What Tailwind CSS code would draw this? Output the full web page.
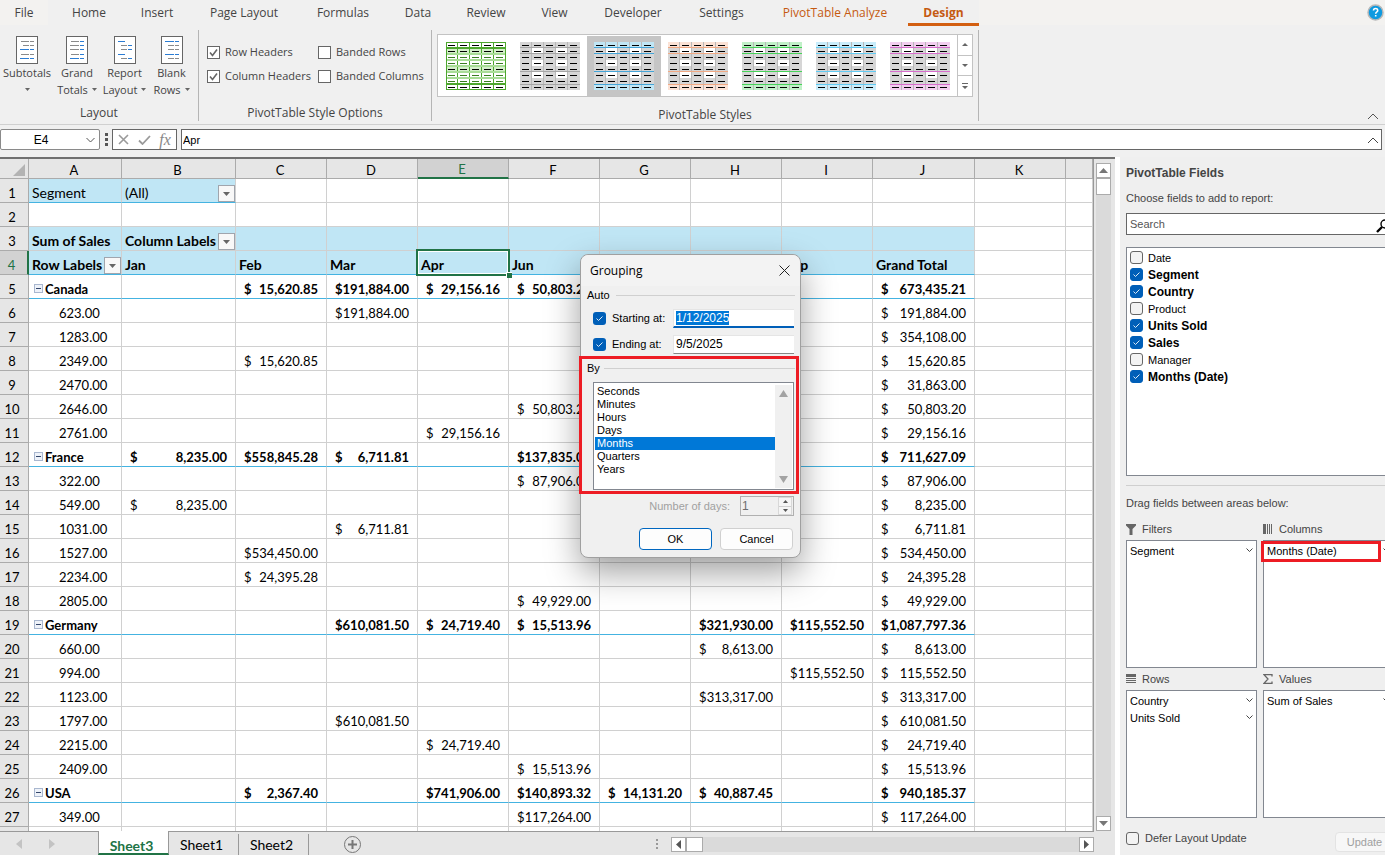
<!DOCTYPE html>
<html lang="en">
<head>
  <meta charset="UTF-8" />
  <meta name="viewport" content="width=device-width, initial-scale=1.0" />
  <title>PivotTable Grouping</title>
  <script src="https://cdn.jsdelivr.net/npm/@tailwindcss/browser@4"></script>
</head>
<body class="h-screen flex flex-col overflow-hidden bg-[#f0f0f0] text-[#444] font-['Open_Sans',sans-serif] text-[12px]">

  <!-- ribbon tabs -->
  <nav class="flex shrink-0 h-[27px] bg-[#f0f0f0] relative">
    <a href="#" class="w-12 h-[25px] flex items-center justify-center bg-[#f3f2f0]">File</a>
    <a href="#" class="w-[82px] h-[25px] flex items-center justify-center">Home</a>
    <a href="#" class="w-[54px] h-[25px] flex items-center justify-center">Insert</a>
    <a href="#" class="w-[120px] h-[25px] flex items-center justify-center">Page Layout</a>
    <a href="#" class="w-[78px] h-[25px] flex items-center justify-center">Formulas</a>
    <a href="#" class="w-[72px] h-[25px] flex items-center justify-center">Data</a>
    <a href="#" class="w-16 h-[25px] flex items-center justify-center">Review</a>
    <a href="#" class="w-[73px] h-[25px] flex items-center justify-center">View</a>
    <a href="#" class="w-[84px] h-[25px] flex items-center justify-center">Developer</a>
    <a href="#" class="w-[93px] h-[25px] flex items-center justify-center">Settings</a>
    <a href="#" class="w-[134px] h-[25px] flex items-center justify-center text-[#c55a11]">PivotTable Analyze</a>
    <a href="#" class="ml-1.5 w-[71px] h-[26px] pt-0.5 flex items-center justify-center font-bold text-[#c55a11] border-b-3 border-[#d35f11]">Design</a>
    <div class="flex-1 h-[25px] bg-[#f3f2f0] flex justify-end">
      <button aria-label="Help" class="w-[18px]">
        <svg class="size-[17px]" viewBox="0 0 17 17"><circle cx="8.5" cy="8.5" r="7.5" fill="#0f9ae0" stroke="#b8b8b8" stroke-width="1.5"/><path d="M6.5 6.6c0-2.8 4.2-2.8 4.2-.2 0 1.6-2 1.6-2 3.3M8.7 11v1.6" fill="none" stroke="#fff" stroke-width="1.6"/></svg>
      </button>
    </div>
  </nav>

  <!-- ribbon -->
  <section class="flex shrink-0 h-[98px] border-b border-[#d0d0d0] text-[11px] relative">
    <div class="w-[199px] my-[3px] border-r border-[#b5b5b5] flex flex-col">
      <div id="layout-buttons" class="flex h-[78px] pt-1.5 pl-[2px]"></div>
      <div class="text-center text-[12px] leading-4">Layout</div>
    </div>
    <div class="w-[233px] my-[3px] border-r border-[#b5b5b5] flex flex-col">
      <div id="style-options" class="grid grid-cols-[111px_1fr] h-[78px] pl-2 pt-3 auto-rows-[24px]"></div>
      <div class="text-center text-[12px] leading-4">PivotTable Style Options</div>
    </div>
    <div class="w-[547px] my-[3px] border-r border-[#b5b5b5] flex flex-col">
      <div class="ml-[5px] mt-1 w-[536px] h-[64px] border border-[#c3c3c3] bg-white flex">
        <div id="gallery" class="flex flex-1 pt-px pl-px"></div>
        <div class="w-[15px] border-l border-[#c3c3c3] flex flex-col divide-y divide-[#c3c3c3]">
          <button aria-label="Scroll up" class="flex-1 grid place-items-center"><svg class="w-1.5 h-[3px]" viewBox="0 0 6 3"><path d="M0 3 3 0l3 3z" fill="#666"/></svg></button>
          <button aria-label="Scroll down" class="flex-1 grid place-items-center"><svg class="w-1.5 h-[3px]" viewBox="0 0 6 3"><path d="M0 0h6L3 3z" fill="#666"/></svg></button>
          <button aria-label="More styles" class="flex-1 grid place-items-center"><svg class="w-1.5 h-[6px]" viewBox="0 0 6 6"><path d="M0 0h6v1H0zM0 3h6L3 6z" fill="#666"/></svg></button>
        </div>
      </div>
      <div class="text-center text-[12px] leading-4 mt-[10px]">PivotTable Styles</div>
    </div>
    <div class="flex-1 flex justify-end items-end">
      <button aria-label="Collapse ribbon" class="pr-1.5 pb-1"><svg class="w-3 h-[7px]" viewBox="0 0 12 7"><path d="M1 6l5-5 5 5" fill="none" stroke="#555"/></svg></button>
    </div>
  </section>

  <!-- formula bar -->
  <section class="flex shrink-0 h-8 pt-1 pr-[3px] text-[11px] text-black font-['Liberation_Sans',sans-serif]">
    <div class="w-[100px] h-[21px] border border-[#8a8a8a] rounded-[2px] bg-white flex items-center">
      <input aria-label="Name box" value="E4" class="w-[80px] text-center outline-none text-[12px]" />
      <button aria-label="Names" class="ml-[5px]"><svg class="w-[9px] h-[6px]" viewBox="0 0 9 6"><path d="M.5 1l4 4 4-4" fill="none" stroke="#555"/></svg></button>
    </div>
    <svg class="w-3 h-[21px]" viewBox="0 0 12 21"><path d="M5 4h3v3H5zM5 9h3v3H5zM5 14h3v3H5z" fill="#555"/></svg>
    <div class="w-[65px] h-[21px] border border-[#666] bg-white flex items-center justify-around px-px">
      <button aria-label="Cancel"><svg class="size-[11px]" viewBox="0 0 11 11"><path d="M1 1l9 9M10 1l-9 9" stroke="#9a9a9a" stroke-width="1.6"/></svg></button>
      <button aria-label="Enter"><svg class="w-[13px] h-[10px]" viewBox="0 0 13 10"><path d="M1 5.5l3.5 3.5L12 1" fill="none" stroke="#9a9a9a" stroke-width="1.8"/></svg></button>
      <button aria-label="Insert function" class="font-['Liberation_Serif',serif] italic text-[16px] leading-4 text-[#888]">fx</button>
    </div>
    <div class="ml-1 flex-1 h-[21px] border border-[#666] bg-white flex items-center">
      <input aria-label="Formula" value="Apr" class="flex-1 pl-px pt-0.5 outline-none" />
      <button aria-label="Collapse formula bar" class="pr-0.5 pt-0.5"><svg class="w-3 h-[7px]" viewBox="0 0 12 7"><path d="M1 6l5-5 5 5" fill="none" stroke="#444"/></svg></button>
    </div>
  </section>

  <main class="flex flex-1 min-h-0">
    <!-- worksheet -->
    <section class="flex-1 min-w-0 flex flex-col bg-[#e6e6e6] border-t-2 border-[#707070] font-['Lato',sans-serif] text-black">
      <div class="flex flex-1 min-h-0">
        <div class="flex-1 min-w-0 overflow-hidden bg-white border-r border-[#999]">
          <table id="sheet" class="w-full table-fixed border-separate border-spacing-0 text-[13px] leading-4"></table>
        </div>
        <div class="w-[21px] flex flex-col pl-[2px] pt-1">
          <div class="w-[15px] flex-1 flex flex-col bg-[#dadada]">
            <button aria-label="Scroll up" class="h-[15px] border border-[#ababab] bg-white grid place-items-center"><svg class="w-[9px] h-[5px]" viewBox="0 0 9 5"><path d="M0 5L4.500 0 9 5z" fill="#777"/></svg></button>
            <div class="h-[17px] border border-[#ababab] bg-white"></div>
            <div class="flex-1"></div>
            <button aria-label="Scroll down" class="h-[15px] border border-[#ababab] bg-white grid place-items-center"><svg class="w-[9px] h-[5px]" viewBox="0 0 9 5"><path d="M0 0h9L4.500 5z" fill="#777"/></svg></button>
          </div>
        </div>
      </div>
      <!-- sheet tabs -->
      <div class="flex h-6 shrink-0 border-t border-[#999] items-stretch mr-[21px] text-[14px]">
        <div class="w-[98px] flex items-center gap-[27px] pl-4">
          <svg class="w-[6px] h-[10px]" viewBox="0 0 6 10"><path d="M6 0v10L0 5z" fill="#c3c3c3"/></svg>
          <svg class="w-[6px] h-[10px]" viewBox="0 0 6 10"><path d="M0 0v10l6-5z" fill="#c3c3c3"/></svg>
        </div>
        <button class="-mt-px w-[71px] pt-1 pr-1 bg-white border-x border-[#999] border-b-2 border-b-[#217346] font-bold text-[#217346]">Sheet3</button>
        <button class="w-[70px] pt-px"><span class="block pr-1 border-r border-[#999]">Sheet1</span></button>
        <button class="w-[70px] pt-px"><span class="block pr-1 border-r border-[#999]">Sheet2</span></button>
        <button aria-label="New sheet" class="ml-[35px] pt-0.5"><svg class="size-[17px]" viewBox="0 0 17 17" fill="none" stroke="#777"><circle cx="8.500" cy="8.500" r="8"/><path d="M8.500 4v9M4 8.500h9" stroke-width="2"/></svg></button>
        <div class="flex-1"></div>
        <div class="w-[438px] flex items-center pt-0.5">
          <svg class="w-[2px] h-[11px] mr-[13px]" viewBox="0 0 2 11"><path d="M0 0h2v2H0zM0 4h2v2H0zM0 8h2v2H0z" fill="#999"/></svg>
          <button aria-label="Scroll left" class="size-[15px] border border-[#ababab] bg-white grid place-items-center"><svg class="w-[5px] h-[9px]" viewBox="0 0 5 9"><path d="M5 0v9L0 4.500z" fill="#555"/></svg></button>
          <div class="w-[17px] h-[15px] border border-[#ababab] bg-white"></div>
          <div class="flex-1 h-[15px] bg-[#dadada]"></div>
          <button aria-label="Scroll right" class="size-[15px] border border-[#ababab] bg-white grid place-items-center"><svg class="w-[5px] h-[9px]" viewBox="0 0 5 9"><path d="M0 0v9l5-4.500z" fill="#555"/></svg></button>
        </div>
      </div>
    </section>

    <!-- field list pane -->
    <aside class="w-[270px] shrink-0 overflow-hidden bg-[#efefef] border-l-5 border-white font-['Liberation_Sans',sans-serif] text-[11px] leading-4">
      <div class="w-[274px] pl-1.5 pt-2">
        <h2 class="font-bold text-[12px] leading-4">PivotTable Fields</h2>
        <p class="mt-[9px]"><label for="search">Choose fields to add to report:</label></p>
        <div class="mt-[7px] h-[22px] border border-[#666] bg-white flex items-center">
          <input id="search" placeholder="Search" class="flex-1 pl-[3px] outline-none placeholder:text-[#555]" />
          <svg class="w-[17px] h-[15px] mt-1" viewBox="0 0 17 15" fill="none" stroke="#000"><circle cx="9" cy="5" r="4" stroke-width="1.400"/><path d="M6 8l-5 5" stroke-width="2.400"/></svg>
        </div>
        <div id="fields" class="mt-3 h-[229px] border border-[#828790] bg-white pl-[3px] pt-px text-black"></div>
        <hr class="mt-[9px] border-[#cfcfcf]" />
        <p class="mt-[9px]">Drag fields between areas below:</p>
        <div class="mt-[10px] grid grid-cols-2 gap-x-1.5 gap-y-[3px]">
          <div>
            <h3 class="h-[19px] flex items-start gap-1.5">
              <svg class="w-[10px] h-[11px] mt-[3px]" viewBox="0 0 10 11"><path d="M0 0h10v1.500L6.500 5v6h-3V5L0 1.500z" fill="#666"/></svg>Filters</h3>
            <div class="h-[128px] border border-[#828790] bg-white pl-[3px] pt-px text-black">
              <div class="h-[17px] flex justify-between items-center">Segment<button aria-label="Segment menu" class="pr-[3px]"><svg class="w-[7px] h-[5px]" viewBox="0 0 7 5"><path d="M.5.5l3 3 3-3" fill="none" stroke="#444"/></svg></button></div>
            </div>
          </div>
          <div>
            <h3 class="h-[19px] flex items-start gap-1.5">
              <svg class="w-[10px] h-[10px] mt-[3px]" viewBox="0 0 10 10"><path d="M0 0h3v10H0zM4 0h1v10H4zM6 0h1v10H6zM8 0h1v10H8z" fill="#666"/></svg>Columns</h3>
            <div class="relative h-[128px] border border-[#828790] bg-white pl-[3px] pt-px text-black">
              <div class="h-[17px] flex justify-between items-center">Months (Date)<button aria-label="Months menu" class="pr-[3px]"><svg class="w-[7px] h-[5px]" viewBox="0 0 7 5"><path d="M.5.5l3 3 3-3" fill="none" stroke="#444"/></svg></button></div>
              <div class="absolute -left-[3px] top-0 w-[120px] h-[21px] border-3 border-[#ed1c24] pointer-events-none"></div>
            </div>
          </div>
          <div>
            <h3 class="h-[19px] flex items-start gap-1.5">
              <svg class="w-[10px] h-[10px] mt-[3px]" viewBox="0 0 10 10"><path d="M0 0h10v3H0zM0 4h10v1H0zM0 6h10v1H0zM0 8h10v1H0z" fill="#666"/></svg>Rows</h3>
            <div class="h-[128px] border border-[#828790] bg-white pl-[3px] pt-px text-black">
              <div class="h-[17px] flex justify-between items-center">Country<button aria-label="Country menu" class="pr-[3px]"><svg class="w-[7px] h-[5px]" viewBox="0 0 7 5"><path d="M.5.5l3 3 3-3" fill="none" stroke="#444"/></svg></button></div>
              <div class="h-[17px] flex justify-between items-center">Units Sold<button aria-label="Units Sold menu" class="pr-[3px]"><svg class="w-[7px] h-[5px]" viewBox="0 0 7 5"><path d="M.5.5l3 3 3-3" fill="none" stroke="#444"/></svg></button></div>
            </div>
          </div>
          <div>
            <h3 class="h-[19px] flex items-start gap-1.5">
              <svg class="w-[10px] h-[10px] mt-[3px]" viewBox="0 0 10 10"><path d="M9 2.500V.700H1L5 5 1 9.300h8V7.500" fill="none" stroke="#666" stroke-width="1.300"/></svg>Values</h3>
            <div class="h-[128px] border border-[#828790] bg-white pl-[3px] pt-px text-black">
              <div class="h-[17px] flex justify-between items-center">Sum of Sales<button aria-label="Sum of Sales menu" class="pr-[3px]"><svg class="w-[7px] h-[5px]" viewBox="0 0 7 5"><path d="M.5.5l3 3 3-3" fill="none" stroke="#444"/></svg></button></div>
            </div>
          </div>
        </div>
        <div class="mt-3 flex items-start justify-between">
          <label class="flex items-center gap-[6px]"><input type="checkbox" class="appearance-none size-[13px] border border-[#666] rounded-[3px] bg-[#f3f3f3]" />Defer Layout Update</label>
          <button disabled class="mt-0.5 w-[59px] h-5 border border-[#e3e3e3] rounded-[4px] bg-[#f7f7f7] text-[#a0a0a0]">Update</button>
        </div>
      </div>
    </aside>
  </main>

  <!-- Grouping dialog -->
  <div role="dialog" aria-labelledby="dlg-title" class="absolute left-[580px] top-[254px] w-[221px] h-[304px] rounded-[8px] border border-[#a0a0a0] bg-[#f0f0f0] shadow-[0_14px_34px_rgba(0,0,0,0.38)] font-['Liberation_Sans',sans-serif] text-[11px] leading-[13px] text-black">
    <div class="h-[31px] rounded-t-[8px] bg-[#f3f3f3] flex items-center justify-between pl-[9px] pr-2.5 pb-px font-['Open_Sans',sans-serif] text-[12px]">
      <span id="dlg-title">Grouping</span>
      <button aria-label="Close"><svg class="size-[11px]" viewBox="0 0 11 11"><path d="M.5.5l10 10M10.500.500l-10 10" stroke="#222"/></svg></button>
    </div>
    <div class="pl-1.5 pr-[5px]">
      <div class="flex items-center gap-1.5 pt-[3px]">Auto<span class="flex-1 h-px bg-[#d0d0d0]"></span></div>
      <div class="mt-1.5 pl-1.5 flex flex-col gap-[6px]">
        <div class="flex items-center h-5">
          <label class="w-[80px] flex items-center gap-1.5"><span class="relative size-[13px]"><input type="checkbox" checked class="block appearance-none size-[13px] rounded-[3px] bg-[#005fb8]" /><svg class="absolute inset-0 size-[13px] pointer-events-none" viewBox="0 0 13 13"><path d="M3.500 6.500l2 2 4-4" fill="none" stroke="#dce9f5"/></svg></span>Starting at:</label>
          <input id="start" aria-label="Start date" value="1/12/2025" class="w-[121px] h-[19px] bg-white border-t border-l border-[#e5e5e5] border-b-2 border-b-[#005fb8] pl-[2px] text-[12px] outline-none selection:bg-[#0078d7] selection:text-white" />
        </div>
        <div class="flex items-center h-5">
          <label class="w-[80px] flex items-center gap-1.5"><span class="relative size-[13px]"><input type="checkbox" checked class="block appearance-none size-[13px] rounded-[3px] bg-[#005fb8]" /><svg class="absolute inset-0 size-[13px] pointer-events-none" viewBox="0 0 13 13"><path d="M3.500 6.500l2 2 4-4" fill="none" stroke="#dce9f5"/></svg></span>Ending at:</label>
          <input aria-label="End date" value="9/5/2025" class="w-[121px] h-[19px] bg-white border-t border-l border-[#e5e5e5] border-b border-b-[#868686] pl-[2px] text-[12px] outline-none" />
        </div>
      </div>
      <div class="flex items-center gap-1 pt-2">By<span class="flex-1 h-px bg-[#d0d0d0]"></span></div>
      <div class="mt-[7px] ml-1.5 w-[201px] h-[108px] border border-[#828790] bg-white p-px pt-0.5 flex">
        <ul role="listbox" aria-label="By" class="flex-1">
          <li role="option" class="pl-[2px]">Seconds</li>
          <li role="option" class="pl-[2px]">Minutes</li>
          <li role="option" class="pl-[2px]">Hours</li>
          <li role="option" class="pl-[2px]">Days</li>
          <li role="option" aria-selected="true" class="pl-[2px] bg-[#0078d7] text-white">Months</li>
          <li role="option" class="pl-[2px]">Quarters</li>
          <li role="option" class="pl-[2px]">Years</li>
        </ul>
        <div class="w-[17px] bg-[#f0f0f0] flex flex-col justify-between items-center py-[5px]">
          <svg class="w-[9px] h-[7px]" viewBox="0 0 9 7"><path d="M4.500 0L9 7H0z" fill="#a3a3a3"/></svg>
          <svg class="w-[9px] h-[7px]" viewBox="0 0 9 7"><path d="M0 0h9L4.500 7z" fill="#a3a3a3"/></svg>
        </div>
      </div>
      <div class="mt-1.5 flex justify-end items-center gap-[10px] pr-px text-[#a0a0a0]">
        <label for="days">Number of days:</label>
        <div class="w-[54px] h-5 border border-[#b0b0b0] flex">
          <input id="days" value="1" disabled class="w-[37px] pl-px text-[#6d6d6d] text-[12px]" />
          <div class="w-[14px] flex flex-col divide-y divide-[#d0d0d0] border border-[#d8d8d8] bg-[#f5f5f5]">
            <button disabled aria-label="More days" class="flex-1 grid place-items-center"><svg class="w-[5px] h-[3px]" viewBox="0 0 5 3"><path d="M0 3L2.500 0 5 3z" fill="#555"/></svg></button>
            <button disabled aria-label="Fewer days" class="flex-1 grid place-items-center"><svg class="w-[5px] h-[3px]" viewBox="0 0 5 3"><path d="M0 0h5L2.500 3z" fill="#555"/></svg></button>
          </div>
        </div>
      </div>
      <div class="mt-3 flex justify-end gap-2 pr-[2px]">
        <button class="w-[73px] h-[22px] rounded-[4px] border border-[#0067c0] bg-[#fdfdfd]">OK</button>
        <button class="w-[73px] h-[22px] rounded-[4px] border border-[#d0d0d0] bg-[#fdfdfd]">Cancel</button>
      </div>
    </div>
    <div class="absolute -left-[2px] top-[101px] w-[220px] h-[138px] border-3 border-[#ed1c24] pointer-events-none"></div>
  </div>

  <script>
    // ribbon Layout buttons: each icon line is [x1, x2, left colour, right colour]
    const G = "#8a8a8a", B = "#2b7cd3";
    const layoutButtons = [
      ["w-[50px]", "Subtotals", "", [[5, 12, G, G], [7, 12, G, G], [4, 12, B, B], [5, 12, G, G], [4, 12, B, B]]],
      ["w-[50px]", "Grand", "Totals", [[5, 12, G, B], [4, 12, G, B], [4, 12, G, B], [5, 12, G, B], [4, 12, B, B]]],
      ["w-[45px]", "Report", "Layout", [[4, 10, B, ""], [7, 12, G, B], [7, 12, G, B], [4, 10, B, ""], [7, 12, G, B]]],
      ["w-[49px]", "Blank", "Rows", [[4, 12, B, B], [7, 12, G, G], [7, 12, G, G], [4, 12, B, B], [7, 12, G, G]]],
    ];
    const caret = `<svg class="w-[5px] h-[3px]" viewBox="0 0 5 3"><path d="M0 0h5L2.500 3z" fill="#666"/></svg>`;
    document.getElementById("layout-buttons").innerHTML = layoutButtons.map(([w, a, b, lines]) => `
      <button class="${w} flex flex-col items-center">
        <svg class="w-[22px] h-[28px]" viewBox="0 0 22 28">
          <rect x=".5" y=".5" width="21" height="27" fill="#fff" stroke="#666"/>
          ${lines.map(([x1, x2, c1, c2], i) => {
            const y = [5.5, 9.5, 13.5, 18.5, 22.5][i];
            return `<path d="M${x1} ${y}H${x2 + 1}" stroke="${c1}"/>` + (c2 ? `<path d="M14 ${y}h4" stroke="${c2}"/>` : "");
          }).join("")}
        </svg>
        <span class="leading-[17px]">${a}</span>
        <span class="leading-[17px] min-h-[17px] flex items-center gap-1">${b}${caret}</span>
      </button>`).join("");

    document.getElementById("style-options").innerHTML = [
      ["Row Headers", true], ["Banded Rows", false], ["Column Headers", true], ["Banded Columns", false],
    ].map(([t, on]) => `
      <label class="flex items-center gap-[5px] whitespace-nowrap h-5"><span class="relative size-[13px]">
        <input type="checkbox" ${on ? "checked" : ""} class="block appearance-none size-[13px] border border-[#666] bg-white" />
        ${on ? `<svg class="absolute inset-0 size-[13px] pointer-events-none" viewBox="0 0 13 13"><path d="M3 6.500l2.500 3L10 3.500" fill="none" stroke="#666" stroke-width="1.600"/></svg>` : ""}
      </span>${t}</label>`).join("");

    // PivotTable style thumbnails
    function thumb(fill, line) {
      let s = "";
      const green = !fill;
      for (let r = 0; r < 8; r++) {
        const edge = r === 0 || r === 7;
        const bg = green ? (r === 1 || r === 4 ? "#d5efcb" : "#fff") : edge ? fill : "#d6d6d6";
        s += `<rect x="0" y="${r * 6}" width="60" height="6" fill="${bg}"/>`;
        for (let c = 0; c < 5; c++) {
          if (!green && (r === 1 || r === 3 || r === 5) && (c === 1 || c === 3)) s += `<rect x="${c * 12}" y="${r * 6}" width="11" height="6" fill="#fff"/>`;
        }
      }
      for (let c = 1; c < 5; c++) s += `<path d="M${c * 12 - .5} 0v48" stroke="${green ? "#4ea72e" : "#b9b9b9"}"/>`;
      if (green) {
        s += `<path d="M0 12h60M0 18h60M0 24h60M0 30h60M0 36h60" stroke="#a9dd97" stroke-width="2"/><rect x=".5" y=".5" width="59" height="47" fill="none" stroke="#4ea72e"/><path d="M0 6h60M0 42h60" stroke="#4ea72e" stroke-width="2"/>`;
      } else {
        s += `<path d="M0 5.500h60M0 11.500h60M0 29.500h60M0 42.500h60" stroke="${line}"/>`;
      }
      for (let r = 0; r < 8; r++) for (let c = 0; c < 5; c++) {
        const dark = !green || r === 0 || r === 1 || r === 4 || r === 7;
        s += `<rect x="${c * 12 + 2}" y="${r * 6 + 3}" width="7" height="1" fill="${dark ? "#000" : "#3a7d22"}"/>`;
      }
      return `<svg class="w-[60px] h-[48px]" viewBox="0 0 60 48">${s}</svg>`;
    }
    const styles = [["", ""], ["#d6d6d6", "#a6a6a6"], ["#c0e6f5", "#44a5d8"], ["#fbe2d5", "#f1a983"], ["#c1f0c8", "#47d359"], ["#caedfb", "#61cbf3"], ["#f2ceef", "#d86dcd"]];
    document.getElementById("gallery").innerHTML = styles.map(([f, l], i) =>
      `<button aria-label="Pivot style ${i + 1}" class="w-[74px] h-[60px] grid place-items-center ${i === 2 ? "bg-[#c5c5c5]" : ""}">${thumb(f, l)}</button>`).join("");

    // field list
    document.getElementById("fields").innerHTML = [
      ["Date", 0], ["Segment", 1], ["Country", 1], ["Product", 0], ["Units Sold", 1], ["Sales", 1], ["Manager", 0], ["Months (Date)", 1],
    ].map(([t, on]) => `
      <label class="flex items-center gap-[5px] h-[17px] ${on ? "font-bold text-[12px]" : ""}"><span class="relative size-[13px]">
        <input type="checkbox" ${on ? "checked" : ""} class="block appearance-none size-[13px] rounded-[3px] border border-[#666] bg-[#f3f3f3] checked:bg-[#005fb8] checked:border-[#005fb8]" />
        ${on ? `<svg class="absolute inset-0 size-[13px] pointer-events-none" viewBox="0 0 13 13"><path d="M3.500 6.500l2 2 4-4" fill="none" stroke="#dce9f5"/></svg>` : ""}
      </span>${t}</label>`).join("");

    // worksheet
    const cols = [["", "w-[29px]"], ["A", "w-[93px]"], ["B", "w-[114px]"], ["C", "w-[91px]"], ["D", "w-[91px]"], ["E", "w-[91px]"], ["F", "w-[91px]"],
      ["G", "w-[91px]"], ["H", "w-[91px]"], ["I", "w-[91px]"], ["J", "w-[102px]"], ["K", "w-[91px]"], ["", ""]];
    const rows = [
      { A: "Segment", B: "(All)" },
      {},
      { A: "Sum of Sales", B: "Column Labels" },
      { A: "Row Labels", B: "Jan", C: "Feb", D: "Mar", E: "Apr", F: "Jun", I: "Sep", J: "Grand Total" },
      { A: "Canada", C: "15,620.85", D: "191,884.00", E: "29,156.16", F: "50,803.20", J: "673,435.21" },
      { A: "623.00", D: "191,884.00", J: "191,884.00" },
      { A: "1283.00", J: "354,108.00" },
      { A: "2349.00", C: "15,620.85", J: "15,620.85" },
      { A: "2470.00", J: "31,863.00" },
      { A: "2646.00", F: "50,803.20", J: "50,803.20" },
      { A: "2761.00", E: "29,156.16", J: "29,156.16" },
      { A: "France", B: "8,235.00", C: "558,845.28", D: "6,711.81", F: "137,835.00", J: "711,627.09" },
      { A: "322.00", F: "87,906.00", J: "87,906.00" },
      { A: "549.00", B: "8,235.00", J: "8,235.00" },
      { A: "1031.00", D: "6,711.81", J: "6,711.81" },
      { A: "1527.00", C: "534,450.00", J: "534,450.00" },
      { A: "2234.00", C: "24,395.28", J: "24,395.28" },
      { A: "2805.00", F: "49,929.00", J: "49,929.00" },
      { A: "Germany", D: "610,081.50", E: "24,719.40", F: "15,513.96", H: "321,930.00", I: "115,552.50", J: "1,087,797.36" },
      { A: "660.00", H: "8,613.00", J: "8,613.00" },
      { A: "994.00", I: "115,552.50", J: "115,552.50" },
      { A: "1123.00", H: "313,317.00", J: "313,317.00" },
      { A: "1797.00", D: "610,081.50", J: "610,081.50" },
      { A: "2215.00", E: "24,719.40", J: "24,719.40" },
      { A: "2409.00", F: "15,513.96", J: "15,513.96" },
      { A: "USA", C: "2,367.40", E: "741,906.00", F: "140,893.32", G: "14,131.20", H: "40,887.45", J: "940,185.37" },
      { A: "349.00", F: "117,264.00", J: "117,264.00" },
      {},
    ];
    const drop = `<button aria-label="Filter" class="absolute right-0 bottom-0 size-[17px] border border-[#a0a5ad] bg-[#f8f8f8] grid place-items-center"><svg class="w-[7px] h-[4px]" viewBox="0 0 7 4"><path d="M0 0h7L3.500 4z" fill="#666"/></svg></button>`;
    const minus = `<button aria-label="Collapse" class="size-[9px] mr-[2px] border border-[#a9b7cf] bg-[#eef2f9] grid place-items-center"><span class="block w-[5px] h-px bg-[#33466b]"></span></button>`;

    let html = `<thead><tr>` + cols.map(([l, w], i) =>
      `<th class="${w} h-5 p-0 pt-0.5 pr-0.5 text-center font-normal border-r border-b border-[#ababab] ${l === "E" ? "bg-[#d2d2d2] text-[#217346] border-b-2 border-b-[#217346]" : "bg-[#e6e6e6]"}">${i ? l : `<svg class="ml-auto mr-px size-3" viewBox="0 0 12 12"><path d="M12 0v12H0z" fill="#b3b3b3"/></svg>`}</th>`).join("") + `</tr></thead><tbody>`;
    rows.forEach((row, r) => {
      const n = r + 1;
      const total = [5, 12, 19, 26].includes(n);
      const bold = total || n === 3 || n === 4;
      html += `<tr><th class="h-6 p-0 pt-1 pr-1 text-center font-normal border-r border-b border-[#ababab] ${n === 4 ? "bg-[#d2d2d2] text-[#217346] border-r-2 border-r-[#217346]" : "bg-[#e6e6e6]"}">${n < 28 ? n : ""}</th>`;
      cols.slice(1).forEach(([c]) => {
        const inPivot = c && c !== "K";
        const fill = (n === 1 && (c === "A" || c === "B")) || ((n === 3 || n === 4) && inPivot);
        const blueLine = (n === 1 && (c === "A" || c === "B")) || ((n === 4 || total) && inPivot);
        const v = c && row[c] || "";
        let inner = v;
        if (v && n > 4 && c !== "A") inner = `<div class="flex justify-between pl-[5px] pr-[5px]"><span>$</span><span>${v}</span></div>`;
        else if (total && c === "A") inner = `<div class="flex items-center pl-[2px]">${minus}${v}</div>`;
        else if (n > 4 && c === "A" && v) inner = `<div class="pl-[27px]">${v}</div>`;
        if ((c === "B" && (n === 1 || n === 3)) || (c === "A" && n === 4)) inner += drop;
        if (c === "E" && n === 4) inner += `<div class="absolute -inset-[2px] border-2 border-[#217346] z-10"><div class="size-full border border-white"></div><div class="absolute -right-[4px] -bottom-[4px] size-[6px] bg-[#217346] border-t border-l border-white"></div></div>`;
        html += `<td class="relative h-6 p-0 pt-1 pl-[3px] pr-[3px] whitespace-nowrap border-r border-b border-r-[#d0d0d0] ${n < 5 ? "text-[14px]" : ""} ${fill ? "bg-[#c0e6f5]" : ""} ${blueLine ? "border-b-[#44b3e1]" : "border-b-[#d0d0d0]"} ${bold ? "font-bold" : ""}">${inner}</td>`;
      });
      html += `</tr>`;
    });
    document.getElementById("sheet").innerHTML = html + `</tbody>`;

    document.getElementById("start").select();
  </script>
</body>
</html>
